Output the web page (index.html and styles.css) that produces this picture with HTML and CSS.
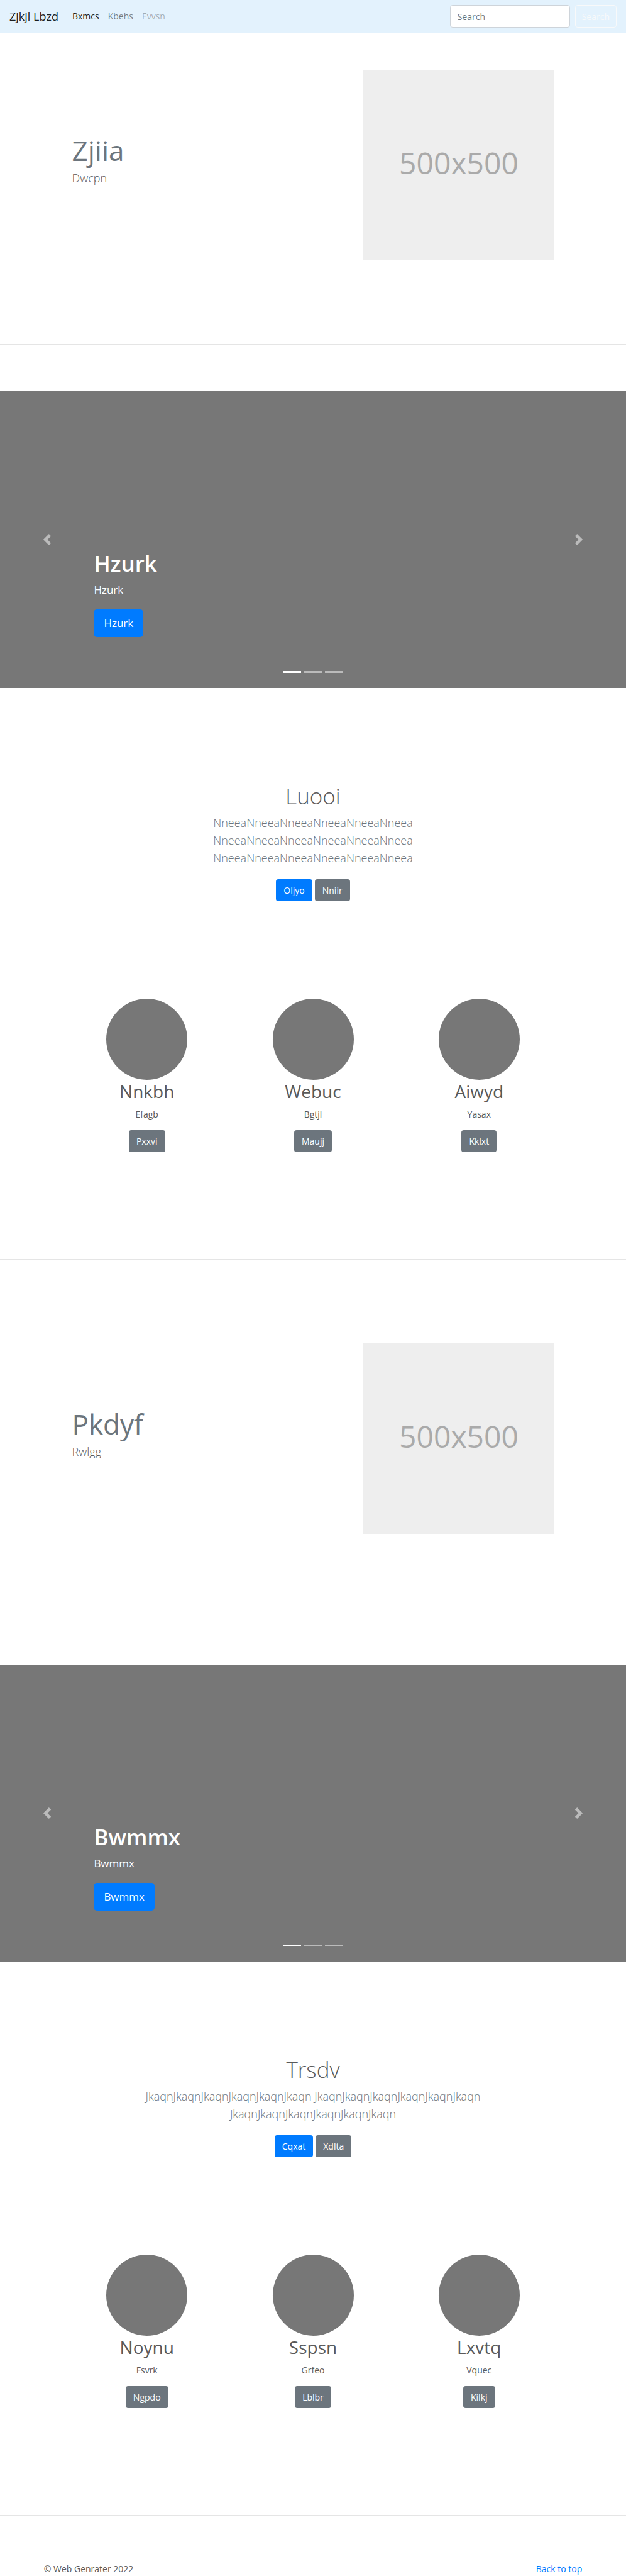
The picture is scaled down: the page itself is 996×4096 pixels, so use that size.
FILE: index.html
```html
<!DOCTYPE html>
<html lang="en">
<head>
<meta charset="utf-8">
<meta name="viewport" content="width=device-width, initial-scale=1">
<title>Zjkjl Lbzd</title>
<link rel="stylesheet" href="styles.css">
</head>
<body>
<nav class="navbar" id="top">
  <a class="brand" href="#">Zjkjl Lbzd</a>
  <ul class="nav-list">
    <li><a class="nav-link active" href="#">Bxmcs</a></li>
    <li><a class="nav-link" href="#">Kbehs</a></li>
    <li><a class="nav-link disabled" href="#" aria-disabled="true">Evvsn</a></li>
  </ul>
  <form class="search">
    <input class="search-input" type="search" placeholder="Search" aria-label="Search">
    <button class="btn btn-outline" type="button">Search</button>
  </form>
</nav>

<main>
  <section class="feature feature-first">
    <div class="feature-text">
      <h2 class="feature-title">Zjiia</h2>
      <p class="lead">Dwcpn</p>
    </div>
    <div class="placeholder">500x500</div>
  </section>
  <hr class="divider">

  <section class="carousel">
    <div class="caption">
      <h1 class="caption-title">Hzurk</h1>
      <p class="caption-text">Hzurk</p>
      <a class="btn btn-primary btn-lg" href="#">Hzurk</a>
    </div>
    <button class="control control-prev" type="button" aria-label="Previous">
      <svg class="chevron" viewBox="0 0 8 8" fill="#fff"><path d="M5.25 0l-4 4 4 4 1.5-1.5L4.25 4l2.5-2.5L5.25 0z"/></svg>
    </button>
    <button class="control control-next" type="button" aria-label="Next">
      <svg class="chevron" viewBox="0 0 8 8" fill="#fff"><path d="M2.75 0l-1.5 1.5L3.75 4l-2.5 2.5L2.75 8l4-4-4-4z"/></svg>
    </button>
    <ol class="indicators">
      <li class="indicator current"></li>
      <li class="indicator"></li>
      <li class="indicator"></li>
    </ol>
  </section>

  <section class="intro">
    <h1 class="intro-title">Luooi</h1>
    <p class="lead muted">NneeaNneeaNneeaNneeaNneeaNneea NneeaNneeaNneeaNneeaNneeaNneea NneeaNneeaNneeaNneeaNneeaNneea</p>
    <div class="actions">
      <a class="btn btn-primary" href="#">Oljyo</a>
      <a class="btn btn-secondary" href="#">Nniir</a>
    </div>
  </section>

  <section class="people">
    <article class="person">
      <div class="avatar"></div>
      <h2 class="person-name">Nnkbh</h2>
      <p class="person-text">Efagb</p>
      <a class="btn btn-secondary" href="#">Pxxvi</a>
    </article>
    <article class="person">
      <div class="avatar"></div>
      <h2 class="person-name">Webuc</h2>
      <p class="person-text">Bgtjl</p>
      <a class="btn btn-secondary" href="#">Maujj</a>
    </article>
    <article class="person">
      <div class="avatar"></div>
      <h2 class="person-name">Aiwyd</h2>
      <p class="person-text">Yasax</p>
      <a class="btn btn-secondary" href="#">Kklxt</a>
    </article>
  </section>
  <hr class="divider">

  <section class="feature">
    <div class="feature-text">
      <h2 class="feature-title">Pkdyf</h2>
      <p class="lead">Rwlgg</p>
    </div>
    <div class="placeholder">500x500</div>
  </section>
  <hr class="divider">

  <section class="carousel">
    <div class="caption">
      <h1 class="caption-title">Bwmmx</h1>
      <p class="caption-text">Bwmmx</p>
      <a class="btn btn-primary btn-lg" href="#">Bwmmx</a>
    </div>
    <button class="control control-prev" type="button" aria-label="Previous">
      <svg class="chevron" viewBox="0 0 8 8" fill="#fff"><path d="M5.25 0l-4 4 4 4 1.5-1.5L4.25 4l2.5-2.5L5.25 0z"/></svg>
    </button>
    <button class="control control-next" type="button" aria-label="Next">
      <svg class="chevron" viewBox="0 0 8 8" fill="#fff"><path d="M2.75 0l-1.5 1.5L3.75 4l-2.5 2.5L2.75 8l4-4-4-4z"/></svg>
    </button>
    <ol class="indicators">
      <li class="indicator current"></li>
      <li class="indicator"></li>
      <li class="indicator"></li>
    </ol>
  </section>

  <section class="intro">
    <h1 class="intro-title">Trsdv</h1>
    <p class="lead muted">JkaqnJkaqnJkaqnJkaqnJkaqnJkaqn JkaqnJkaqnJkaqnJkaqnJkaqnJkaqn JkaqnJkaqnJkaqnJkaqnJkaqnJkaqn</p>
    <div class="actions">
      <a class="btn btn-primary" href="#">Cqxat</a>
      <a class="btn btn-secondary" href="#">Xdlta</a>
    </div>
  </section>

  <section class="people">
    <article class="person">
      <div class="avatar"></div>
      <h2 class="person-name">Noynu</h2>
      <p class="person-text">Fsvrk</p>
      <a class="btn btn-secondary" href="#">Ngpdo</a>
    </article>
    <article class="person">
      <div class="avatar"></div>
      <h2 class="person-name">Sspsn</h2>
      <p class="person-text">Grfeo</p>
      <a class="btn btn-secondary" href="#">Lblbr</a>
    </article>
    <article class="person">
      <div class="avatar"></div>
      <h2 class="person-name">Lxvtq</h2>
      <p class="person-text">Vquec</p>
      <a class="btn btn-secondary" href="#">Kilkj</a>
    </article>
  </section>
  <hr class="divider">
</main>

<footer class="footer">
  <p class="copyright">© Web Genrater 2022</p>
  <a class="to-top" href="#top">Back to top</a>
</footer>
</body>
</html>
```

FILE: styles.css
```css
*, *::before, *::after { box-sizing: border-box; }

body {
  margin: 0;
  background: #fff;
  color: #5a5a5a;
  font-family: "Open Sans", "Noto Sans", sans-serif;
  font-size: 14px;
  line-height: 22px;
}

h1, h2, p, ul, ol { margin: 0; padding: 0; }
ul, ol { list-style: none; }
a { color: #007bff; text-decoration: none; }

.navbar {
  display: flex;
  align-items: center;
  padding: 8px 15px;
  background: #e3f2fd;
}
.brand {
  margin-right: 15px;
  color: rgba(0, 0, 0, .9);
  font-size: 18px;
  line-height: 28px;
}
.nav-list { display: flex; flex: 1; }
.nav-link { display: block; padding: 7px; color: rgba(0, 0, 0, .5); }
.nav-link.active { color: rgba(0, 0, 0, .9); }
.nav-link.disabled { color: rgba(0, 0, 0, .3); }

.search { display: flex; gap: 8px; }
.search-input {
  width: 191px;
  height: 36px;
  padding: 6px 11px;
  border: 1px solid #ced4da;
  border-radius: 4px;
  background: #fff;
  color: #495057;
  font: inherit;
  appearance: none;
}
.search-input::placeholder { color: #6c757d; opacity: 1; }

.btn {
  display: inline-block;
  padding: 6px 11px;
  border: 1px solid transparent;
  border-radius: 4px;
  color: #fff;
  font: inherit;
  line-height: 21px;
  text-align: center;
}
.btn-primary { background: #007bff; }
.btn-secondary { background: #6c757d; }
.btn-outline {
  padding: 6px 10px;
  border-color: #f8f9fa;
  background: transparent;
  color: #f8f9fa;
}
.btn-lg {
  padding: 7px 15px;
  border-radius: 5px;
  font-size: 17px;
  line-height: 28px;
}

.feature {
  display: flex;
  justify-content: space-between;
  padding: 133px 11.5%;
}
.feature-first { padding-top: 59px; }
.feature-text { padding-top: 98px; }
.feature-title {
  color: #6c757d;
  font-size: 44px;
  font-weight: 400;
  line-height: 60px;
}
.lead { font-size: 18px; font-weight: 300; line-height: 28px; }
.muted { color: #6c757d; }
.placeholder {
  display: flex;
  align-items: center;
  justify-content: center;
  width: 303px;
  height: 303px;
  padding-bottom: 8px;
  background: #eee;
  color: #aaa;
  font-size: 48px;
}
.divider { margin: 0; border: 0; border-top: 1px solid rgba(0, 0, 0, .1); }

.carousel {
  position: relative;
  margin-top: 74px;
  background: #777;
}
.caption {
  display: flex;
  flex-direction: column;
  align-items: flex-start;
  justify-content: flex-end;
  min-height: 472px;
  padding: 0 15% 81px;
  color: #fff;
}
.caption-title {
  margin-bottom: 6px;
  font-size: 35px;
  font-weight: 600;
  line-height: 44px;
}
.caption-text { margin-bottom: 17px; font-size: 17px; line-height: 28px; }

.control {
  position: absolute;
  top: 0;
  bottom: 0;
  display: flex;
  align-items: center;
  justify-content: center;
  width: 15%;
  padding: 0;
  border: 0;
  background: none;
  opacity: .5;
}
.control-prev { left: 0; }
.control-next { right: 0; }
.chevron { width: 18px; height: 18px; }

.indicators {
  position: absolute;
  right: 0;
  bottom: 24px;
  left: 0;
  display: flex;
  justify-content: center;
  gap: 5px;
}
.indicator { width: 28px; height: 3px; background: #fff; opacity: .5; }
.indicator.current { opacity: 1; }

.intro {
  max-width: 58%;
  margin: 0 auto;
  padding: 150px 0 155px;
  text-align: center;
}
.intro-title {
  margin-bottom: 6px;
  font-size: 35px;
  font-weight: 300;
  line-height: 44px;
}
.actions { display: flex; justify-content: center; gap: 4px; margin-top: 20px; }

.people {
  display: grid;
  grid-template-columns: repeat(3, 1fr);
  padding: 0 10.2% 170px;
}
.person { display: flex; flex-direction: column; align-items: center; }
.avatar { width: 129px; height: 129px; border-radius: 50%; background: #777; }
.person-name { font-size: 28px; font-weight: 400; line-height: 37px; }
.person-text { margin: 7px 0 14px; }

.footer {
  display: flex;
  justify-content: space-between;
  padding: 74px 7% 0;
}
```
